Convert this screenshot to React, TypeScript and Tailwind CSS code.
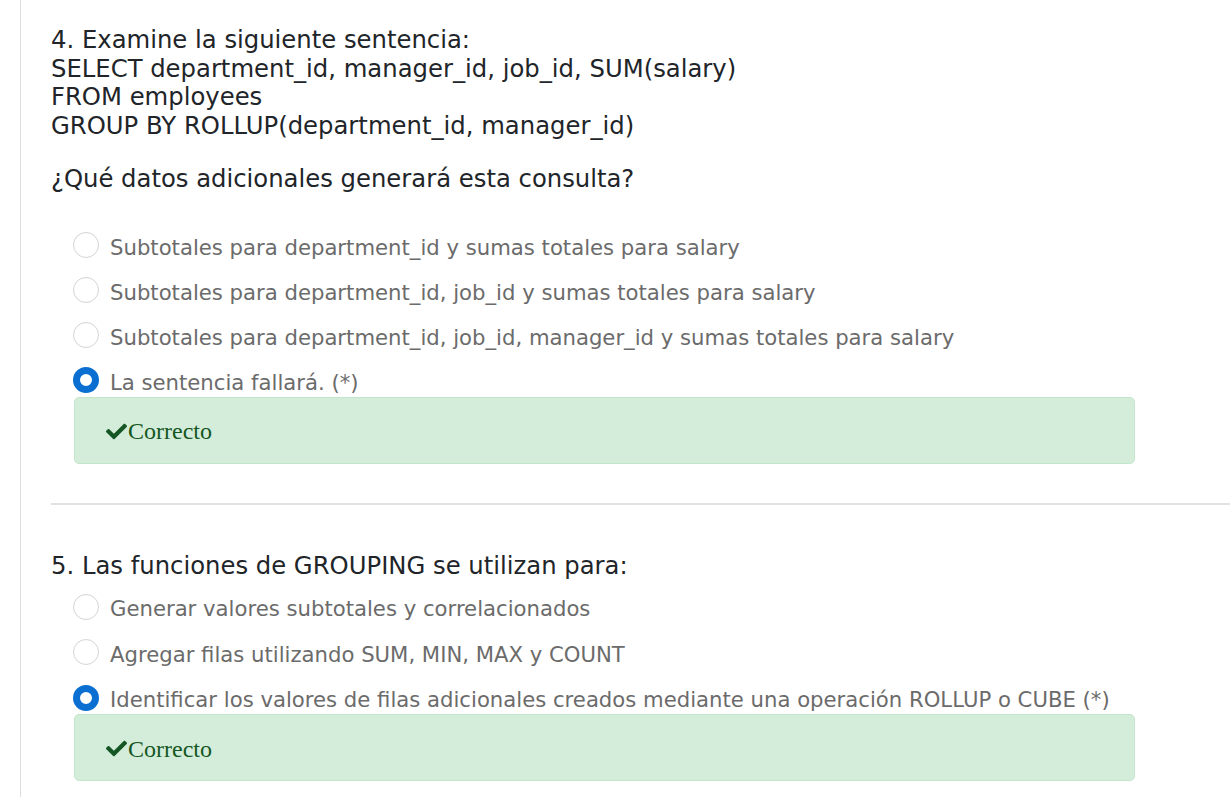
import { FaCheck } from "react-icons/fa";

type Option = { text: string; selected?: boolean };

const q4Options: Option[] = [
  { text: "Subtotales para department_id y sumas totales para salary" },
  { text: "Subtotales para department_id, job_id y sumas totales para salary" },
  { text: "Subtotales para department_id, job_id, manager_id y sumas totales para salary" },
  { text: "La sentencia fallará. (*)", selected: true },
];

const q5Options: Option[] = [
  { text: "Generar valores subtotales y correlacionados" },
  { text: "Agregar filas utilizando SUM, MIN, MAX y COUNT" },
  {
    text: "Identificar los valores de filas adicionales creados mediante una operación ROLLUP o CUBE (*)",
    selected: true,
  },
];

const Radio = ({ selected }: { selected?: boolean }) =>
  selected ? (
    <span className="mb-[5px] h-[26px] w-[26px] shrink-0 rounded-full border-[7px] border-[#0b6fd1] bg-white" />
  ) : (
    <span className="mb-[5px] h-[26px] w-[26px] shrink-0 rounded-full border-[1.5px] border-[#d4d4d4] bg-white" />
  );

const Options = ({ items, gap }: { items: Option[]; gap: string }) => (
  <div className={`flex flex-col ${gap} ml-[22px]`}>
    {items.map((o) => (
      <div key={o.text} className="flex h-[26px] items-center gap-[11px]">
        <Radio selected={o.selected} />
        <span className="text-[21.2px] leading-[26px] text-[#6b6b6b]">{o.text}</span>
      </div>
    ))}
  </div>
);

const Correct = () => (
  <div className="ml-[23px] mt-[1px] flex h-[67px] w-[1061px] items-center rounded-[5px] border border-[#c3e6cb] bg-[#d4edda] pl-[31px] pt-[2px] font-['Liberation_Serif',serif] text-[24px] text-[#155724]">
    <FaCheck size={21} className="mr-[1px]" />
    <span>Correcto</span>
  </div>
);

export default function App() {
  return (
    <div className="min-h-[797px] bg-white font-['DejaVu_Sans',Verdana,sans-serif]">
      <div className="ml-5 min-h-[797px] border-l border-[#dddddd] pl-[30px] pt-[26px]">
        <div className="text-[24.3px] leading-[28.7px] text-[#212529]">
          <p>4. Examine la siguiente sentencia:</p>
          <p>SELECT department_id, manager_id, job_id, SUM(salary)</p>
          <p>FROM employees</p>
          <p>GROUP BY ROLLUP(department_id, manager_id)</p>
          <p className="mt-[24px]">¿Qué datos adicionales generará esta consulta?</p>
        </div>
        <div className="mt-[41px]">
          <Options items={q4Options} gap="gap-[19px]" />
        </div>
        <Correct />

        <div className="mt-[39px] border-t-2 border-[#e0e2e6]" />

        <p className="mt-[47px] text-[24.3px] leading-[28.7px] text-[#212529]">
          5. Las funciones de GROUPING se utilizan para:
        </p>
        <div className="mt-[16px]">
          <Options items={q5Options} gap="gap-[19.5px]" />
        </div>
        <Correct />
      </div>
    </div>
  );
}
